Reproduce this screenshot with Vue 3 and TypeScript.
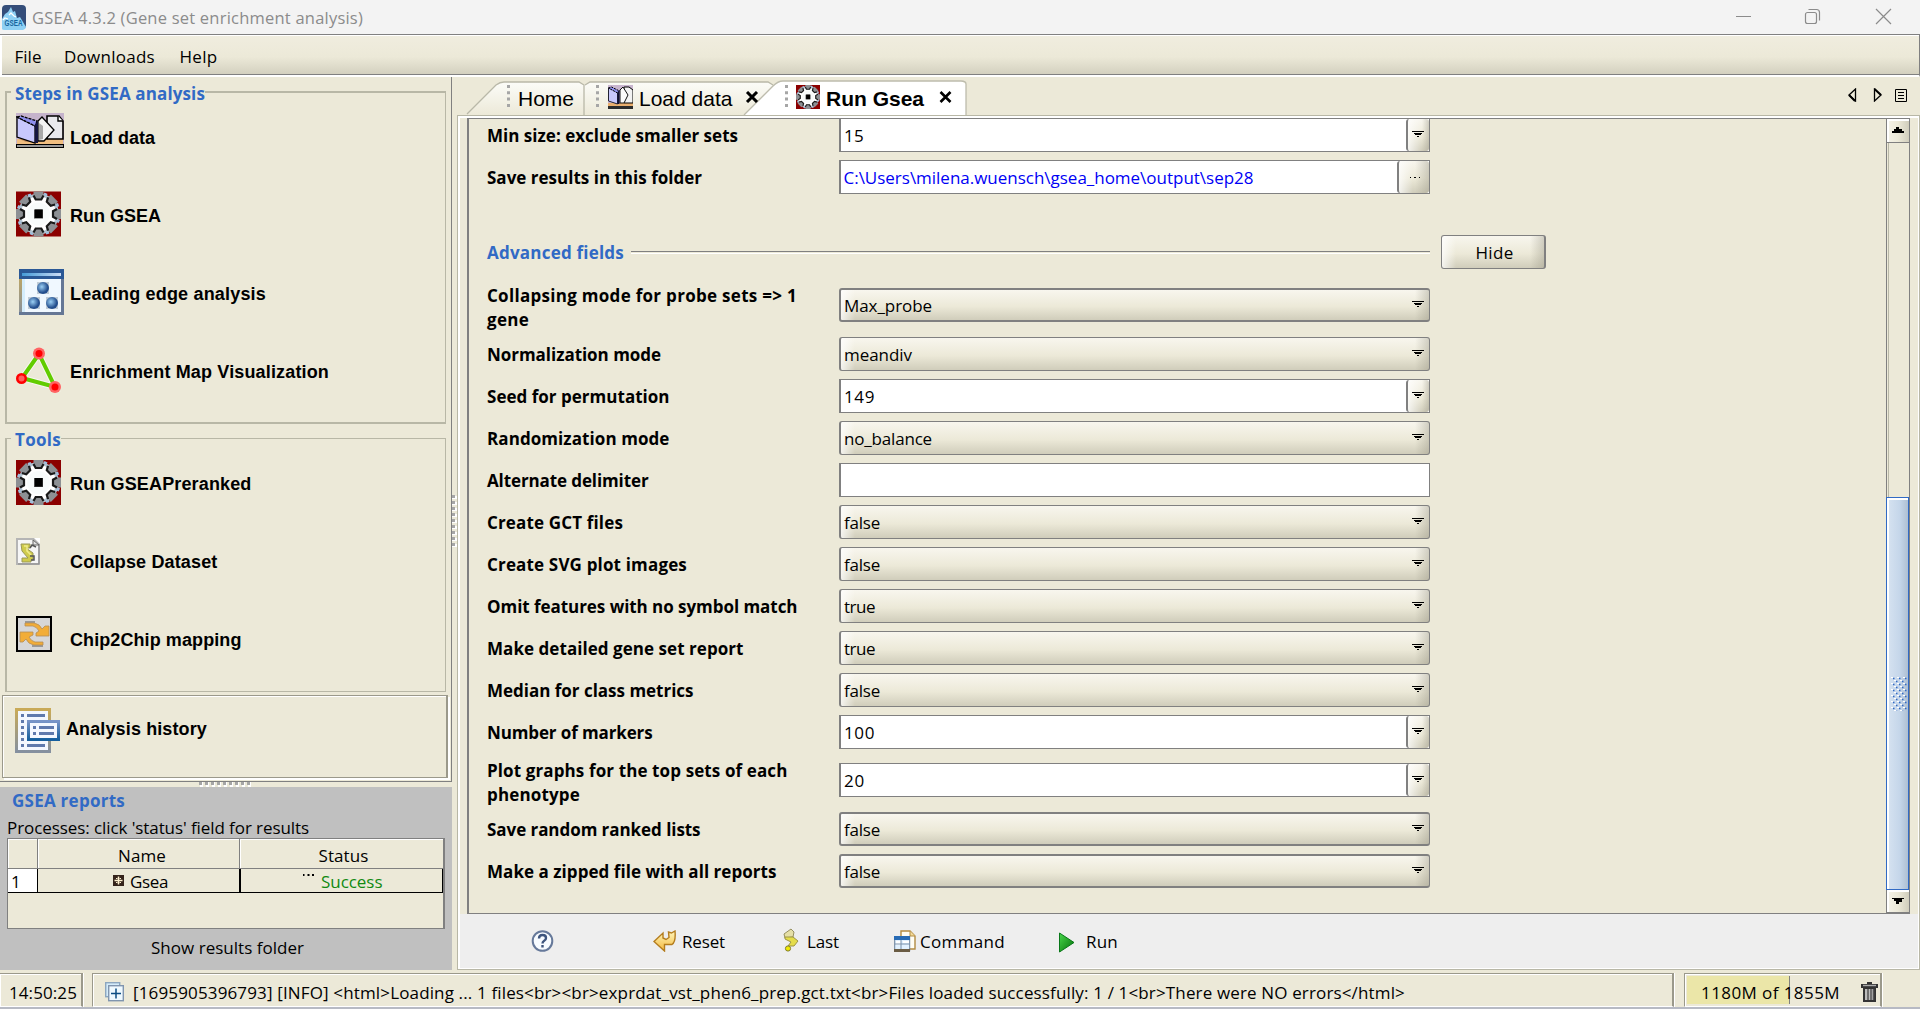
<script setup lang="ts">
import type { Directive } from 'vue'

interface Field {
  label: { text: string; width: number }[]
  kind: 'select' | 'spin' | 'path' | 'text'
  value: string
  width: number
  gap: number
  heavy?: boolean
}

// Tracks a piece of text so that it takes the given advance width in pixels.
const vFit: Directive<HTMLElement, number> = {
  mounted(el, binding) {
    const count = (el.textContent ?? '').length
    const natural = el.getBoundingClientRect().width
    if (count > 0) el.style.letterSpacing = `${((binding.value - natural) / count).toFixed(3)}px`
  },
}

const topFields: Field[] = [
  { label: [{ text: 'Min size: exclude smaller sets', width: 251 }], kind: 'spin', value: '15', width: 20, gap: 0 },
  { label: [{ text: 'Save results in this folder', width: 215 }], kind: 'path', value: 'C:\\Users\\milena.wuensch\\gsea_home\\output\\sep28', width: 410, gap: 8 },
]

const advancedFields: Field[] = [
  { label: [{ text: 'Collapsing mode for probe sets => 1', width: 310 }, { text: 'gene', width: 42 }], kind: 'select', value: 'Max_probe', width: 88, gap: 19, heavy: true },
  { label: [{ text: 'Normalization mode', width: 174 }], kind: 'select', value: 'meandiv', width: 68, gap: 15 },
  { label: [{ text: 'Seed for permutation', width: 182.5 }], kind: 'spin', value: '149', width: 31, gap: 8 },
  { label: [{ text: 'Randomization mode', width: 182.5 }], kind: 'select', value: 'no_balance', width: 88, gap: 8 },
  { label: [{ text: 'Alternate delimiter', width: 161.5 }], kind: 'text', value: '', width: 0, gap: 8 },
  { label: [{ text: 'Create GCT files', width: 136 }], kind: 'select', value: 'false', width: 36, gap: 8 },
  { label: [{ text: 'Create SVG plot images', width: 200 }], kind: 'select', value: 'false', width: 36, gap: 8 },
  { label: [{ text: 'Omit features with no symbol match', width: 310.5 }], kind: 'select', value: 'true', width: 31, gap: 8 },
  { label: [{ text: 'Make detailed gene set report', width: 256.5 }], kind: 'select', value: 'true', width: 31, gap: 8 },
  { label: [{ text: 'Median for class metrics', width: 206.5 }], kind: 'select', value: 'false', width: 36, gap: 8 },
  { label: [{ text: 'Number of markers', width: 165.5 }], kind: 'spin', value: '100', width: 31, gap: 8 },
  { label: [{ text: 'Plot graphs for the top sets of each', width: 300.5 }, { text: 'phenotype', width: 93 }], kind: 'spin', value: '20', width: 21, gap: 14 },
  { label: [{ text: 'Save random ranked lists', width: 213.5 }], kind: 'select', value: 'false', width: 36, gap: 15, heavy: true },
  { label: [{ text: 'Make a zipped file with all reports', width: 289.5 }], kind: 'select', value: 'false', width: 36, gap: 8, heavy: true },
]

const allFields = [...topFields, ...advancedFields]
const teeth = [0, 45, 90, 135, 180, 225, 270, 315]
const statusText =
  '[1695905396793] [INFO] <html>Loading ... 1 files<br><br>exprdat_vst_phen6_prep.gct.txt<br>Files loaded successfully: 1 / 1<br>There were NO errors</html>'
</script>

<template>
  <svg class="defs" width="0" height="0">
    <defs>
      <symbol id="gear" viewBox="0 0 45 45">
        <rect width="45" height="45" fill="#8b0000" />
        <circle cx="22.5" cy="22.5" r="20.5" fill="#b3c3d1" />
        <circle cx="22.5" cy="22.5" r="17.500" fill="#fff" />
        <circle cx="22.5" cy="22.5" r="11.500" fill="#f8fbfb" />
        <g v-for="a in teeth" :key="a" :transform="`rotate(${a} 22.5 22.5)`">
          <path d="M17.500 0h10v5l-2 3h-6l-2-3z" fill="#8d9094" />
          <path d="M17.500 4l2.200 4h5.600l2.200-4" fill="none" stroke="#1a1a1a" stroke-width="2.200" />
          <path d="M28 2l3 1.500" stroke="#9fc0de" stroke-width="2.400" />
        </g>
        <rect x="18" y="18" width="9" height="9" fill="#4a4a4a" />
        <rect x="19" y="18" width="7.500" height="8.500" fill="#000" />
      </symbol>
      <symbol id="books" viewBox="0 0 48 35">
        <rect width="48" height="35" fill="#c5b3cb" />
        <path d="M1 26h46v5H1z" fill="#f0be80" />
        <path d="M3 26h17v3H10z" fill="#c9935f" />
        <path d="M31 3h12l4 5v18H31z" fill="#e9e9ed" stroke="#000" stroke-width="1.600" />
        <path d="M42 3v5h5" fill="#fff" stroke="#000" stroke-width="1.400" />
        <path d="M22 8l4-4 12 13-10 11h-6z" fill="#f3f3f3" stroke="#000" stroke-width="1.300" />
        <path d="M23 10v17l4-1V13z" fill="#a8a8a8" />
        <path d="M1 4l18 9v17L1 24z" fill="#c8c8fd" stroke="#000" stroke-width="1.300" />
        <path d="M1 4l4-1 16 5-2 5z" fill="#8f90ee" stroke="#000" stroke-width="1.300" stroke-dasharray="3 1" />
        <path d="M19 11l3-3v22h-3z" fill="#151540" />
        <rect x=".5" y="31.5" width="47" height="3" fill="#999" stroke="#000" />
      </symbol>
      <symbol id="books-small" viewBox="0 0 25 24">
        <rect width="25" height="24" fill="#c9b6cf" />
        <path d="M0 18h25v3H0z" fill="#e9ae6e" />
        <path d="M16 2h5l4 3v13h-9z" fill="#f3f3f3" stroke="#000" />
        <path d="M12 5l3-3 5 8-4 8h-4z" fill="#fafafa" stroke="#111" />
        <path d="M.5 3l9 4v12l-9-3z" fill="#c8c8fd" stroke="#223" />
        <path d="M.500 3l3-1 8 4-2 2z" fill="#8f90ee" stroke="#000" stroke-dasharray="2 1" />
        <path d="M9.500 7l2-2v14h-2z" fill="#101035" />
        <rect y="21" width="25" height="3" fill="#2b2b2b" />
      </symbol>
      <linearGradient id="head" x1="0" x2="1"><stop stop-color="#459bd8" /><stop offset="1" stop-color="#cbdcf5" /></linearGradient>
      <linearGradient id="side" x1="0" x2="0" y1="0" y2="1"><stop stop-color="#c9aa58" /><stop offset="1" stop-color="#85909f" /></linearGradient>
      <linearGradient id="blue" x1="0" x2="0" y1="0" y2="1"><stop stop-color="#7894c7" /><stop offset="1" stop-color="#165f9e" /></linearGradient>
      <linearGradient id="gold" x1="0" x2="0" y1="0" y2="1"><stop stop-color="#fff6bd" /><stop offset="1" stop-color="#f4b93c" /></linearGradient>
      <linearGradient id="green" x1="0" x2="1" y1="0" y2="1"><stop stop-color="#49d74b" /><stop offset="1" stop-color="#047009" /></linearGradient>
      <radialGradient id="ball" cx=".4" cy=".4"><stop stop-color="#9bd0f5" /><stop offset="1" stop-color="#244f8e" /></radialGradient>
    </defs>
  </svg>

  <div class="window">
    <header class="title-bar">
      <svg class="app-icon" width="24" height="24" viewBox="0 0 24 24">
        <rect width="24" height="24" rx="4" fill="#344d79" />
        <path d="M0 23V14l3-5 3-2 3-5 2 5 2-1 2 7 3-1 3 5 3 5q0 2-3 3H3q-3 0-3-1z" fill="#8ed0f4" />
        <path d="M1 15l2-2 3 1M7 10l2-2 3 3 2 1" stroke="#fff" stroke-width="1.300" fill="none" />
        <text x="2.500" y="21" textLength="18" lengthAdjust="spacingAndGlyphs" font-family="Liberation Sans" font-weight="700" font-size="8.500" fill="#17669f">GSEA</text>
      </svg>
      <span v-fit="331">GSEA 4.3.2 (Gene set enrichment analysis)</span>
      <svg class="controls" width="160" height="17" viewBox="0 0 160 17" fill="none" stroke="#8b8b8b">
        <path d="M1 8.500h15" />
        <rect x="70.500" y="4.500" width="11" height="11" rx="2" stroke-width="1.200" />
        <path d="M73.500 1.500h8a3 3 0 0 1 3 3v8" stroke-width="1.200" />
        <path d="M141 1l15 15M156 1L141 16" stroke-width="1.200" />
      </svg>
    </header>

    <nav class="menu-bar">
      <span class="m1"><i v-fit="27">File</i></span>
      <span class="m2"><i v-fit="91">Downloads</i></span>
      <span class="m3"><i v-fit="38">Help</i></span>
    </nav>

    <div class="body">
      <aside class="sidebar">
        <section class="steps-pane">
          <div class="group steps">
            <h2><i v-fit="190">Steps in GSEA analysis</i></h2>
            <div class="step"><svg width="48" height="35"><use href="#books" /></svg><b v-fit="85">Load data</b></div>
            <div class="step"><svg width="45" height="46"><use href="#gear" /></svg><b v-fit="91">Run GSEA</b></div>
            <div class="step">
              <svg class="lead" width="45" height="46" viewBox="0 0 45 46">
                <rect width="45" height="46" fill="url(#side)" />
                <path d="M0 43h45v3H0zM42 10h3v36h-3z" fill="#657795" />
                <rect width="45" height="10" fill="#2a5896" />
                <rect x="3" y="4" width="39" height="3" fill="url(#head)" />
                <rect x="3" y="10" width="39" height="33" fill="#f0f8ff" />
                <rect x="3" y="10" width="3" height="33" fill="#d4edfc" />
                <g fill="#c0ccd6"><rect x="18" y="13" width="12" height="12" /><rect x="9" y="28" width="12" height="12" /><rect x="27" y="28" width="12" height="12" /></g>
                <g fill="url(#ball)"><circle cx="24" cy="19" r="6" /><circle cx="15" cy="34" r="6" /><circle cx="33" cy="34" r="6" /></g>
              </svg>
              <b v-fit="196">Leading edge analysis</b>
            </div>
            <div class="step">
              <svg width="45" height="46" viewBox="0 0 45 46">
                <path d="M23 7L6 31l33 9z" fill="none" stroke="#fff" stroke-width="6" opacity=".6" />
                <path d="M23 7L6 31l33 9z" fill="none" stroke="#62cc00" stroke-width="4" />
                <g fill="#ff6464"><circle cx="23" cy="6.500" r="6" /><circle cx="39" cy="40" r="6" /></g>
                <g fill="#f00"><circle cx="23" cy="6.500" r="3.500" /><circle cx="39" cy="40" r="3.500" /><circle cx="5.500" cy="31.500" r="5.500" /></g>
                <circle cx="5.500" cy="31.500" r="3" fill="#ff6060" />
              </svg>
              <b v-fit="259">Enrichment Map Visualization</b>
            </div>
          </div>
          <div class="group tools">
            <h2><i v-fit="46">Tools</i></h2>
            <div class="step"><svg width="45" height="45"><use href="#gear" /></svg><b v-fit="181.500">Run GSEAPreranked</b></div>
            <div class="step">
              <svg width="24" height="27" viewBox="0 0 24 27">
                <path d="M1 1h17l5 5v20H1z" fill="#f6f6f6" stroke="#b5b5b5" stroke-width="2" />
                <path d="M18 0h6v6z" fill="#fff" />
                <path d="M23 6v20H2" fill="none" stroke="#8b8b8b" />
                <path d="M17 2v5h6z" fill="#e4e4e4" stroke="#666" />
                <path d="M5 6h9v4h-4l7 5v7h-2v2H6v-4h6l-6-7z" fill="#cfcb4c" stroke="#9a9858" />
                <path d="M8 8h3v5l4 4" fill="none" stroke="#efec8a" stroke-width="1.600" />
                <path d="M14 10l2-3 4 2M14 18h4v4h-3" fill="none" stroke="#555" stroke-width="1.500" />
              </svg>
              <b v-fit="147.500">Collapse Dataset</b>
            </div>
            <div class="step">
              <svg width="36" height="36" viewBox="0 0 36 36">
                <rect x="1" y="1" width="34" height="34" fill="#d7d7d7" stroke="#000" stroke-width="2" />
                <path d="M9 6h10M16 30h11" stroke="#999" stroke-width="2" />
                <path d="M9 7h9q6 1 8 6l3-3h4v10H20v-3l3-2q-2-4-6-5H9z" fill="#f2ad38" stroke="#b58d55" stroke-width=".8" />
                <path d="M27 29h-9q-6-1-8-6l-3 3H4V16h13v3l-4 2q2 4 6 5h8z" fill="#f2ad38" stroke="#b58d55" stroke-width=".8" />
              </svg>
              <b v-fit="171.500">Chip2Chip mapping</b>
            </div>
          </div>
          <div class="history">
            <svg width="45" height="45" viewBox="0 0 45 45">
              <rect x="1.500" y="1.500" width="33" height="42" fill="#f3f7ff" stroke="url(#side)" stroke-width="3" />
              <path d="M6 7.500h3M6 13.500h3M6 19.500h3M6 25.500h3M6 31.500h3M6 37.500h3M12 7.500h18M12 37.500h18" stroke="#5f79ad" stroke-width="3" />
              <rect x="13.500" y="13.500" width="30" height="18" fill="#f4f8ff" stroke="url(#blue)" stroke-width="3" />
              <path d="M18 19.500h3M18 25.500h3M24 19.500h15M24 25.500h15" stroke="#5f79ad" stroke-width="3" />
            </svg>
            <b v-fit="141">Analysis history</b>
          </div>
        </section>

        <div class="h-split"><div class="h-dots"></div></div>

        <section class="reports">
          <h2><i v-fit="113">GSEA reports</i></h2>
          <p><i v-fit="302">Processes: click 'status' field for results</i></p>
          <div class="table">
            <div class="t-head"><span></span><span><i v-fit="48">Name</i></span><span><i v-fit="50">Status</i></span></div>
            <div class="t-row">
              <span class="num">1</span>
              <span class="name">
                <svg width="11" height="11" viewBox="0 0 11 11"><rect width="11" height="11" fill="#35241b" /><path d="M5.500 1.500v8M1.500 5.500h8" stroke="#fff1d0" stroke-width="1.500" /><path d="M3 3.500h1.500M6.500 3.500H8M3 7.500h1.500M6.500 7.500H8" stroke="#fff1d0" /></svg>
                <i v-fit="38">Gsea</i>
              </span>
              <span class="status">
                <svg width="11" height="2"><path d="M0 1h1.500M4.500 1h2M9 1h2" stroke="#000" stroke-width="2" /></svg>
                <i v-fit="61.500">Success</i>
              </span>
            </div>
          </div>
          <div class="show"><i v-fit="153">Show results folder</i></div>
        </section>
      </aside>

      <div class="v-split"><div class="v-dots"></div></div>

      <main class="workspace">
        <div class="tab-strip">
          <svg class="tab-shapes" width="520" height="38" viewBox="456 77 520 38">
            <defs>
              <linearGradient id="tab" x1="0" x2="0" y1="0" y2="1"><stop stop-color="#fcfcf8" /><stop offset="1" stop-color="#ece9d8" /></linearGradient>
            </defs>
            <path d="M466 115L495 85q4-3 8-3h75l5 3v30z" fill="url(#tab)" />
            <path d="M583 115V85l6-3h178l5 3-26 30z" fill="url(#tab)" />
            <path d="M466 114L495 85q4-3 8-3h75l5 3v30M584 85l5-3h178l5 3" fill="none" stroke="#b9b8a8" stroke-width="1.300" />
            <path d="M743 115l29-29q5-5 10-5h178l5 3v31z" fill="#fff" />
            <path d="M743 115l29-29q5-5 10-5h178q5 0 5 3v31" fill="none" stroke="#bdbcad" stroke-width="1.300" />
            <path d="M507.500 85v22M596.500 85v22M785.500 85v22" stroke="#a6a6a6" stroke-width="3" stroke-dasharray="3 3.300" />
          </svg>
          <span class="tab home">Home</span>
          <span class="tab load"><svg width="25" height="24"><use href="#books-small" /></svg>Load data<svg class="x" width="14" height="12" viewBox="0 0 14 12"><path d="M2 1l10 10M12 1L2 11" stroke="#000" stroke-width="3" /></svg></span>
          <span class="tab run"><svg width="24" height="24"><use href="#gear" /></svg>Run Gsea<svg class="x" width="13" height="12" viewBox="0 0 13 12"><path d="M1.500 1l10 10M11.500 1l-10 10" stroke="#000" stroke-width="2.600" /></svg></span>
          <svg class="tab-nav" width="60" height="14" viewBox="0 0 60 14" fill="none" stroke="#000">
            <path d="M7.500 1v12L1 7z" stroke-width="1.300" /><path d="M1 7l6 6" stroke-width="2" />
            <path d="M26.500 1v12L33 7z" stroke-width="1.300" /><path d="M26.500 1L33 7" stroke-width="2" />
            <path d="M47.500 1.500h11v12h-11zM50 4.500h6M50 7.500h6M50 10.500h6" />
          </svg>
        </div>

        <div class="tab-body">
          <div class="scroll-area">
            <div class="form">
              <template v-for="(f, i) in allFields" :key="i">
                <div v-if="i === topFields.length" class="advanced">
                  <h2><i v-fit="137">Advanced fields</i></h2>
                  <div class="rule"></div>
                  <button class="hide"><i v-fit="38">Hide</i></button>
                </div>
                <div class="field" :style="{ marginTop: f.gap + 'px' }">
                  <label :class="{ double: f.label.length > 1 }"><span v-for="l in f.label" :key="l.text"><i v-fit="l.width">{{ l.text }}</i></span></label>
                  <div class="box" :class="[f.kind, { heavy: f.heavy }]">
                    <div class="val"><i v-if="f.value" v-fit="f.width">{{ f.value }}</i></div>
                    <div v-if="f.kind === 'spin' || f.kind === 'select'" class="arrow">
                      <svg width="12" height="6" viewBox="0 0 12 6"><path d="M0 0h12v1H0zM2 2h8v1H2zM3 3h6v1H3zM5 5h2v1H5z" /></svg>
                    </div>
                    <div v-if="f.kind === 'path'" class="browse"><svg width="10" height="1"><path d="M0 .5h1M4 .5h2M9 .5h1" stroke="#000" /></svg></div>
                  </div>
                </div>
              </template>
            </div>
            <div class="scrollbar">
              <div class="sb-btn"><svg width="12" height="6" viewBox="0 0 12 6"><path d="M0 6V4h2V2h2V0h3v2h3v2h2v2z" /></svg></div>
              <div class="track"></div>
              <div class="thumb">
                <svg width="16" height="34" viewBox="0 0 16 34">
                  <g v-for="n in 6" :key="n" :transform="`translate(0 ${(n - 1) * 6})`">
                    <path d="M0 .5h2M6 .5h2M12 .5h2M3 3.500h2M9 3.500h2" stroke="#fff" />
                    <path d="M2 1.500h1.500M8 1.500h1.500M14 1.500h1.500M5 4.500h1.500M11 4.500h1.500" stroke="#316ac5" stroke-width="1.500" />
                  </g>
                </svg>
              </div>
              <div class="sb-btn down"><svg width="12" height="6" viewBox="0 0 12 6"><path d="M0 0v1h2v2h2v3h3V4h3V1h2V0z" /></svg></div>
            </div>
          </div>

          <div class="actions">
            <span class="a-help">
              <svg width="23" height="22" viewBox="0 0 23 22"><circle cx="11.500" cy="11" r="9.800" fill="#f7fbff" stroke="#66799a" stroke-width="2" /><path d="M8 8.500q0-3.500 3.500-3.500T15 8q0 1.700-1.800 2.700-1.700 1-1.700 2.800M11.500 15v2.500" fill="none" stroke="#3d547d" stroke-width="2.400" /></svg>
            </span>
            <span class="a-reset">
              <svg width="23" height="22" viewBox="0 0 23 22"><path d="M1 11.500L10 3v5l3 1.500 3-2-.500-5.500 3 1L22 1q1 11-3 13.500h-7.500V21z" fill="url(#gold)" stroke="#b47d1e" stroke-width="1.400" /></svg>
              <i v-fit="43">Reset</i>
            </span>
            <span class="a-last">
              <svg width="16" height="24" viewBox="0 0 16 24"><path d="M8 1l3 3-1 5-8 1-1-4z" fill="#e5dfa7" stroke="#96905f" /><path d="M2 9l8 0 5 4-4 5-6 0 3-4-6-3z" fill="#e4dc4a" stroke="#9c9546" /><circle cx="5" cy="20.500" r="2.600" fill="#f0e900" stroke="#817d30" /></svg>
              <i v-fit="32">Last</i>
            </span>
            <span class="a-command">
              <svg width="22" height="22" viewBox="0 0 22 22"><path d="M7 1h9l5 5v13H7z" fill="#fffdf3" stroke="#b28b42" stroke-width="1.400" /><path d="M16 1v5h5" fill="#f3db9a" stroke="#b28b42" /><rect x=".7" y="6.700" width="15" height="14" fill="#e1f1ff" stroke="#69819b" /><rect x="0" y="6" width="16" height="4" fill="#276bb5" /><path d="M2 11h5v4H2zM9 11h6v2H9z" fill="#fff" /><path d="M1 14h15M7 10v9" stroke="#7890aa" /><rect y="19" width="16" height="3" fill="#6a5c44" /></svg>
              <i v-fit="85">Command</i>
            </span>
            <span class="a-run">
              <svg width="16" height="21" viewBox="0 0 16 21"><path d="M.5 1L15 10.500.500 20z" fill="url(#green)" stroke="#087718" /></svg>
              <i v-fit="32">Run</i>
            </span>
          </div>
        </div>
      </main>
    </div>

    <footer class="status-bar">
      <div class="clock"><i v-fit="68">14:50:25</i></div>
      <div class="message">
        <svg width="19" height="20" viewBox="0 0 19 20"><rect x=".7" y=".7" width="14" height="14" fill="#d4ecfa" stroke="#8ca6bf" stroke-width="1.400" /><rect x="3.700" y="3.700" width="14.600" height="15" fill="#eef9ff" stroke="#8095af" stroke-width="1.400" /><path d="M6 11.500h10M11 6.500v10" stroke="#0b4c83" stroke-width="1.500" /></svg>
        <i v-fit="1272">{{ statusText }}</i>
      </div>
      <div class="memory">
        <div class="used"></div>
        <div class="mem-text"><i v-fit="139">1180M of 1855M</i></div>
        <svg width="17" height="20" viewBox="0 0 17 20"><path d="M6 0h5v2H6zM0 2h17v4H0z" fill="#333" /><path d="M2 3.500h13" stroke="#aaa" stroke-width="1.400" /><path d="M2 6h13v14H2z" fill="#333" /><path d="M4 7h9v11H4z" fill="#bdbdbd" /><path d="M7 7v11M10 7v11M12.500 7v11" stroke="#555" stroke-width="1.500" /></svg>
      </div>
    </footer>
  </div>
</template>

<style>
body { margin: 0; overflow: hidden; background: #ece9d8; }
</style>

<style scoped>
.defs { display: block; height: 0; width: 0; }
.window {
  width: 1920px; height: 1009px; display: flex; flex-direction: column; overflow: hidden; box-sizing: border-box;
  background: #ece9d8; color: #000; font: 17px/24px "Open Sans", "Noto Sans", sans-serif; border-bottom: 2px solid #b7bac4;
  white-space: pre;
}
.window * { box-sizing: border-box; }
svg { display: block; flex: none; }
.app-icon { overflow: visible; }
i { font-style: normal; display: inline-block; }
h2 { margin: 0; font-size: 17px; line-height: 24px; font-weight: 700; color: #316ac5; }

.title-bar { flex: none; height: 34px; background: #f3f3f3; display: flex; align-items: center; color: #8b8b8b; font-size: 16.500px; padding-left: 2px; }
.title-bar > span { margin-left: 6px; margin-top: 2px; }
.controls { margin-left: auto; margin-right: 25px; margin-top: -1px; }

.menu-bar {
  flex: none; height: 43px; display: flex; align-items: center; padding: 5px 0 2px 14px; border: 1px solid #808080; border-left: 0;
  border-bottom: 2px solid #fff; box-shadow: inset 0 1px #fff, inset 2px 0 #fff, inset 0 -1px #808080;
  background: linear-gradient(#f0eddf, #ece9d8 55%, #d2cfbe);
}
.m1 { width: 49.500px; margin-left: .500px; }
.m2 { width: 115.500px; }

.body { flex: none; height: 893px; display: flex; }
.sidebar { width: 452px; display: flex; flex-direction: column; }
.steps-pane { height: 705px; border-right: 1px solid #808080; border-bottom: 1px solid #808080; padding: 14px 0 0 5px; display: flex; flex-direction: column; }
.group { flex: none; width: 441px; border: 1px solid #b8b7a6; border-left-width: 2px; padding-left: 9px; display: flex; flex-direction: column; }
.group h2 { flex: none; background: #ece9d8; align-self: flex-start; margin: -12px 0 0 -5px; padding-left: 4px; height: 24px; line-height: 26px; }
.steps { height: 333px; border-top-width: 2px; border-bottom-width: 2px; }
.tools { height: 254px; margin-top: 14px; }
.step { flex: none; height: 78px; display: flex; align-items: flex-start; }
.steps .step:nth-child(2) { margin-top: 8px; }
.tools .step:nth-child(2) { margin-top: 9px; }
.step svg { margin-right: 6px; }
.step svg[width="45"] { margin-right: 9px; }
.step svg[width="24"] { margin-right: 30px; }
.step svg[width="36"] { margin-right: 18px; }
.step svg.lead { margin-left: 3px; margin-right: 6px; }
.step b { line-height: 24px; margin-top: 12px; font-family: "Liberation Sans", sans-serif; font-size: 18px; }
.steps .step b { margin-top: 13px; }
.history { flex: none; margin: 3px 0 0 -3px; width: 446px; height: 83px; border: 1px solid #9b998b; border-right: 2px solid #9b998b; box-shadow: inset 1px 1px #fff, 2px 2px #fff; padding: 12px 0 0 12px; display: flex; }
.history b { font: 700 18px/24px "Liberation Sans", sans-serif; margin: 9px 0 0 6px; align-self: flex-start; }

.h-split { height: 5px; padding-left: 199px; }
.h-dots { width: 52px; height: 5px; background: repeating-linear-gradient(90deg, #a6a6a6 0 3px, #fff 3px 4px, transparent 4px 6px) top / 100% 3px no-repeat, repeating-linear-gradient(90deg, transparent 0 1px, #fff 1px 4px, transparent 4px 6px) 0 3px / 100% 2px no-repeat; }
.reports { flex: none; height: 183px; background: #c0c0c0; padding-left: 7px; }
.reports h2 { margin: 2px 0 0 5px; }
.reports p { margin: 3px 0 0 0; height: 22px; }
.table { width: 438px; height: 91px; border: 1px solid #808080; border-right-width: 2px; background: #ece9d8; }
.t-head, .t-row { display: flex; text-align: center; }
.t-head { height: 30px; line-height: 34px; border-bottom: 1px solid #808080; }
.t-head span { border-right: 1px solid #808080; box-shadow: inset 1px 1px #fff; }
.t-head span:nth-child(1) { width: 30px; }
.t-head span:nth-child(2) { width: 202px; padding-left: 7px; }
.t-head span:nth-child(3) { width: 203px; border: 0; padding-left: 4px; }
.t-row { height: 24px; line-height: 26px; border-bottom: 1px solid #000; }
.t-row > span { border-right: 1px solid #000; display: flex; }
.num { width: 30px; background: #fff; padding-left: 3px; }
.name { width: 202px; padding: 0 0 0 75px; }
.name svg { margin: 6px 6px 0 0; }
.status { width: 203px; color: #118a11; padding-left: 62px; border-left: 1px solid #000; }
.status svg { margin: 5px 7px 0 0; }
.show { margin: 7px 0 0 144px; }

.v-split { width: 5px; padding: 418px 0 0; }
.v-dots { width: 5px; height: 52px; background: repeating-linear-gradient(#a6a6a6 0 3px, #fff 3px 4px, transparent 4px 6px) 0 0 / 3px 100% no-repeat, repeating-linear-gradient(transparent 0 1px, #fff 1px 4px, transparent 4px 6px) 3px 0 / 2px 100% no-repeat; }

.workspace { width: 1463px; display: flex; flex-direction: column; }
.tab-strip { height: 38px; display: flex; position: relative; font: 21px/24px "Liberation Sans", sans-serif; flex: none; }
.tab-shapes { position: absolute; left: 0; top: 0; }
.tab { position: relative; display: flex; align-items: flex-start; padding-top: 10px; height: 38px; }
.tab svg { margin: -2px 6px 0 0; }
.tab .x { margin: 4px 0 0 13px; }
.home { margin-left: 61px; width: 90px; }
.load { width: 188px; }
.run { font-weight: 700; }
.run svg { margin-right: 6px; }
.run .x { margin-left: 15px; }
.tab-nav { margin: 11px 12px 0 auto; }
.tab-body { flex: none; height: 855px; border: 1px solid #b8b7a6; box-shadow: inset 2px 2px #fff, inset -1px -1px #fff; padding: 2px 1px 1px 9px; display: flex; flex-direction: column; background: #ece9d8; }
.scroll-area { height: 796px; width: 1443px; border: 1px solid #808080; border-left-width: 2px; display: flex; overflow: hidden; }
.form { flex: none; width: 1417px; margin-top: -1px; padding-left: 18px; }
.field { display: flex; height: 34px; align-items: center; }
.field label { width: 352px; font-weight: 700; display: flex; flex-direction: column; margin-top: 2px; }
.field label.double { margin: 5px 0 0; }
.box { width: 591px; height: 34px; display: flex; border: 1px solid #808080; border-left-width: 2px; background: #fff; }
.box .val { flex: 1; padding-left: 3px; line-height: 33px; }
.path .val { color: #0000f5; padding-left: 2.500px; }
.arrow { width: 24px; padding: 12px 0 0 6px; }
.select, .arrow, .hide, .browse {
  background: linear-gradient(90deg, rgba(255, 255, 255, .75), transparent 14px calc(100% - 14px), rgba(150, 147, 130, .4)), linear-gradient(#f8f6ee, #ece9d8 55%, #d0cdbb);
}
.select { border-radius: 3px; }
.select .arrow { background: none; padding: 12px 0 0 7px; }
.heavy { border-top-width: 2px; border-bottom-width: 2px; }
.heavy .val { line-height: 32px; }
.select.heavy .arrow { padding-top: 11px; }
.spin .arrow { width: 23px; border-left: 2px solid #808080; border-radius: 3px; padding-left: 4px; }
.browse { width: 32px; border-left: 2px solid #808080; border-radius: 3px; padding: 16px 0 0 11px; }
.advanced { margin-top: 41px; height: 34px; display: flex; align-items: center; }
.advanced h2 { width: 144px; padding-top: 2px; }
.rule { width: 799px; height: 3px; border-top: 1px solid #808080; border-bottom: 1px solid #fff; }
.hide { margin-left: 11px; width: 105px; height: 34px; border: 1px solid #808080; border-right-width: 2px; border-radius: 3px; font: inherit; color: #000; padding: 1px 0 0 3px; }

.scrollbar { width: 23px; display: flex; flex-direction: column; border-left: 1px solid #808080; margin-right: -1px; height: 794px; }
.sb-btn { height: 24px; flex: none; border-bottom: 1px solid #808080; background: linear-gradient(90deg, #f5f3e9, #ece9d8 50%, #d0cdbc); box-shadow: inset 2px 2px #fff; padding: 8px 0 0 5px; }
.track { flex: none; height: 354px; border-left: 1px solid #b8b7a6; margin-left: 1px; }
.thumb { height: 393px; flex: none; margin-left: -1px; border: 1px solid #316ac5; background: linear-gradient(90deg, #d7e3f1, #c5d6ea 60%, #aebfd2); box-shadow: inset 2px 2px #fff; padding: 179px 0 0 4px; }
.down { height: 23px; }
.actions { flex: 1; margin-left: -7px; background: #eee; display: flex; padding-top: 16px; align-items: flex-start; }
.actions span { display: flex; }
.actions i { line-height: 24px; }
.a-help { margin-left: 71px; width: 122px; }
.a-reset { width: 130px; }
.a-reset i { margin-left: 6px; }
.a-last { width: 111px; }
.a-last svg { margin-top: -2px; }
.a-last i { margin-left: 8px; }
.a-command { width: 165px; }
.a-command i { margin-left: 4px; }
.a-run svg { margin-top: 2px; }
.a-run i { margin-left: 11px; }

.status-bar { height: 37px; flex: none; display: flex; padding-top: 3px; line-height: 37px; }
.status-bar > div { height: 34px; border: 1px solid #9b998b; border-bottom: 1px solid #fff; border-right: 2px solid #9b998b; box-shadow: inset 1px 1px #fff, 1px 0 #fff; display: flex; }
.clock { width: 83px; padding-left: 9px; border-left: 0 !important; }
.message { width: 1582px; margin-left: 9px; padding-left: 12px; }
.message svg { margin: 8px 9px 0 0; }
.memory { width: 198px; margin-left: 10px; position: relative; padding-left: 16px; }
.used { position: absolute; left: 2px; top: 2px; width: 103px; height: 28px; background: #ebe6a8; border-right: 1px solid #808080; }
.mem-text { position: relative; width: 160px; }
.memory svg { margin-top: 8px; }
</style>
